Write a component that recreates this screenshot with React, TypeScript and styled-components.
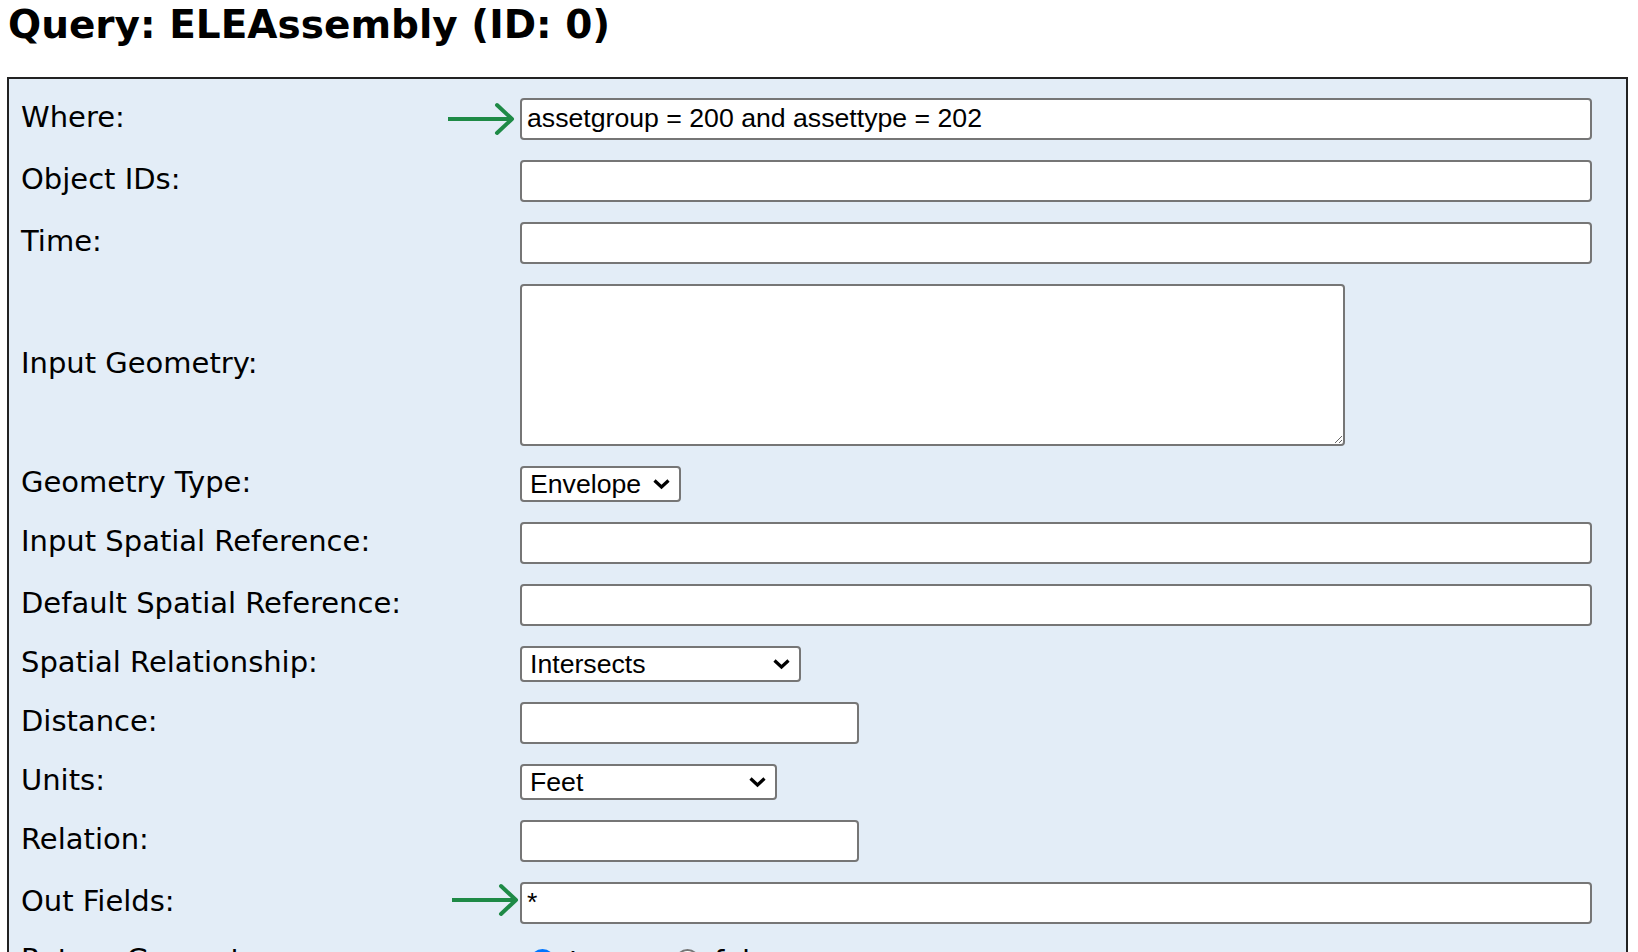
import React from 'react';
import styled, { createGlobalStyle } from 'styled-components';

const GlobalStyle = createGlobalStyle`
  html, body {
    margin: 0;
    padding: 0;
    background: #ffffff;
  }
  body {
    font-family: "DejaVu Sans", Verdana, sans-serif;
    color: #000;
  }
`;

const Page = styled.div`
  padding: 2px 10px 0 7px;
  height: 952px;
  overflow: hidden;
  box-sizing: border-box;
`;

const Title = styled.h2`
  margin: 0 0 29px 1px;
  font-family: "DejaVu Sans", Verdana, sans-serif;
  font-weight: bold;
  font-size: 39px;
  line-height: 46px;
  color: #000;
`;

const Panel = styled.div`
  border: 2px solid #222;
  background: #e3edf7;
  padding: 19px 34px 40px 12px;
  display: grid;
  grid-template-columns: 499px 1fr;
  row-gap: 20px;
  align-items: center;
`;

const Label = styled.label`
  font-size: 29px;
  line-height: 30px;
  padding-bottom: 4px;
  white-space: nowrap;
`;

const Cell = styled.div`
  position: relative;
  display: flex;
  align-items: center;
`;

const TextInput = styled.input<{ $width?: number }>`
  box-sizing: border-box;
  width: ${(p) => (p.$width ? `${p.$width}px` : '100%')};
  height: 42px;
  border: 2px solid #767676;
  border-radius: 4px;
  background: #fff;
  padding: 0 5px 2px;
  margin: 0;
  font-family: "Liberation Sans", Arial, sans-serif;
  font-size: 26.67px;
  color: #000;
  outline: none;
`;

const TextArea = styled.textarea`
  box-sizing: border-box;
  width: 825px;
  height: 162px;
  border: 2px solid #767676;
  border-radius: 4px;
  background: #fff;
  margin: 0;
  padding: 4px;
  font-family: "Liberation Mono", monospace;
  font-size: 26px;
`;

const SelectWrap = styled.div<{ $width: number }>`
  position: relative;
  width: ${(p) => p.$width}px;
`;

const Select = styled.select`
  appearance: none;
  -webkit-appearance: none;
  box-sizing: border-box;
  width: 100%;
  height: 36px;
  border: 2px solid #767676;
  border-radius: 4px;
  background: #fff;
  margin: 0;
  padding: 0 36px 0 8px;
  font-family: "Liberation Sans", Arial, sans-serif;
  font-size: 26.67px;
  color: #000;
  outline: none;
`;

const Chevron = styled.svg`
  position: absolute;
  right: 10px;
  top: 50%;
  transform: translateY(-50%);
  pointer-events: none;
`;

const Arrow = styled.svg<{ $left: number; $dy: number }>`
  position: absolute;
  left: ${(p) => p.$left}px;
  top: 50%;
  transform: translateY(calc(-50% + ${(p) => p.$dy}px));
  pointer-events: none;
`;

const RadioGroup = styled.div`
  display: flex;
  align-items: center;
  padding-left: 10px;
`;

const RadioLabel = styled.label`
  display: flex;
  align-items: center;
  gap: 14px;
  width: 145px;
  font-size: 29px;
`;

const Radio = styled.input`
  appearance: none;
  -webkit-appearance: none;
  margin: 0;
  width: 25px;
  height: 25px;
  border-radius: 50%;
  border: 2px solid #767676;
  background: #fff;
  &:checked {
    border: 7px solid #0075ff;
  }
`;

const GreenArrow = ({ left = -72, dy = 0 }: { left?: number; dy?: number }) => (
  <Arrow $left={left} $dy={dy} width="70" height="34" viewBox="0 0 70 34">
    <line x1="0" y1="17" x2="64" y2="17" stroke="#1e8a46" strokeWidth="4" />
    <polyline
      points="49,3 64,17 49,31"
      fill="none"
      stroke="#1e8a46"
      strokeWidth="4"
      strokeLinecap="round"
      strokeLinejoin="round"
    />
  </Arrow>
);

const Dropdown = ({ width, value, options }: { width: number; value: string; options: string[] }) => (
  <SelectWrap $width={width}>
    <Select defaultValue={value}>
      {options.map((o) => (
        <option key={o} value={o}>{o}</option>
      ))}
    </Select>
    <Chevron width="19" height="12" viewBox="0 0 19 12">
      <polyline points="2.5,2.5 9.5,9 16.5,2.5" fill="none" stroke="#000" strokeWidth="3.2" />
    </Chevron>
  </SelectWrap>
);

const App = (): JSX.Element => {
  return (
    <Page>
      <GlobalStyle />
      <Title>Query: ELEAssembly (ID: 0)</Title>
      <Panel>
        <Label>Where:</Label>
        <Cell>
          <GreenArrow left={-72} />
          <TextInput defaultValue="assetgroup = 200 and assettype = 202" />
        </Cell>

        <Label>Object IDs:</Label>
        <Cell><TextInput /></Cell>

        <Label>Time:</Label>
        <Cell><TextInput /></Cell>

        <Label>Input Geometry:</Label>
        <Cell><TextArea /></Cell>

        <Label>Geometry Type:</Label>
        <Cell>
          <Dropdown width={161} value="Envelope" options={['Envelope', 'Point', 'Polyline', 'Polygon', 'Multipoint']} />
        </Cell>

        <Label>Input Spatial Reference:</Label>
        <Cell><TextInput /></Cell>

        <Label>Default Spatial Reference:</Label>
        <Cell><TextInput /></Cell>

        <Label>Spatial Relationship:</Label>
        <Cell>
          <Dropdown width={281} value="Intersects" options={['Intersects', 'Contains', 'Crosses', 'Envelope Intersects', 'Overlaps', 'Touches', 'Within']} />
        </Cell>

        <Label>Distance:</Label>
        <Cell><TextInput $width={339} /></Cell>

        <Label>Units:</Label>
        <Cell>
          <Dropdown width={257} value="Feet" options={['Feet', 'Meters', 'Miles', 'Nautical Miles', 'Kilometers']} />
        </Cell>

        <Label>Relation:</Label>
        <Cell><TextInput $width={339} /></Cell>

        <Label>Out Fields:</Label>
        <Cell>
          <GreenArrow left={-68} dy={-3} />
          <TextInput defaultValue="*" />
        </Cell>

        <Label>Return Geometry:</Label>
        <Cell>
          <RadioGroup>
            <RadioLabel><Radio type="radio" name="rg" defaultChecked /> true</RadioLabel>
            <RadioLabel><Radio type="radio" name="rg" /> false</RadioLabel>
          </RadioGroup>
        </Cell>
      </Panel>
    </Page>
  );
};

export default App;
